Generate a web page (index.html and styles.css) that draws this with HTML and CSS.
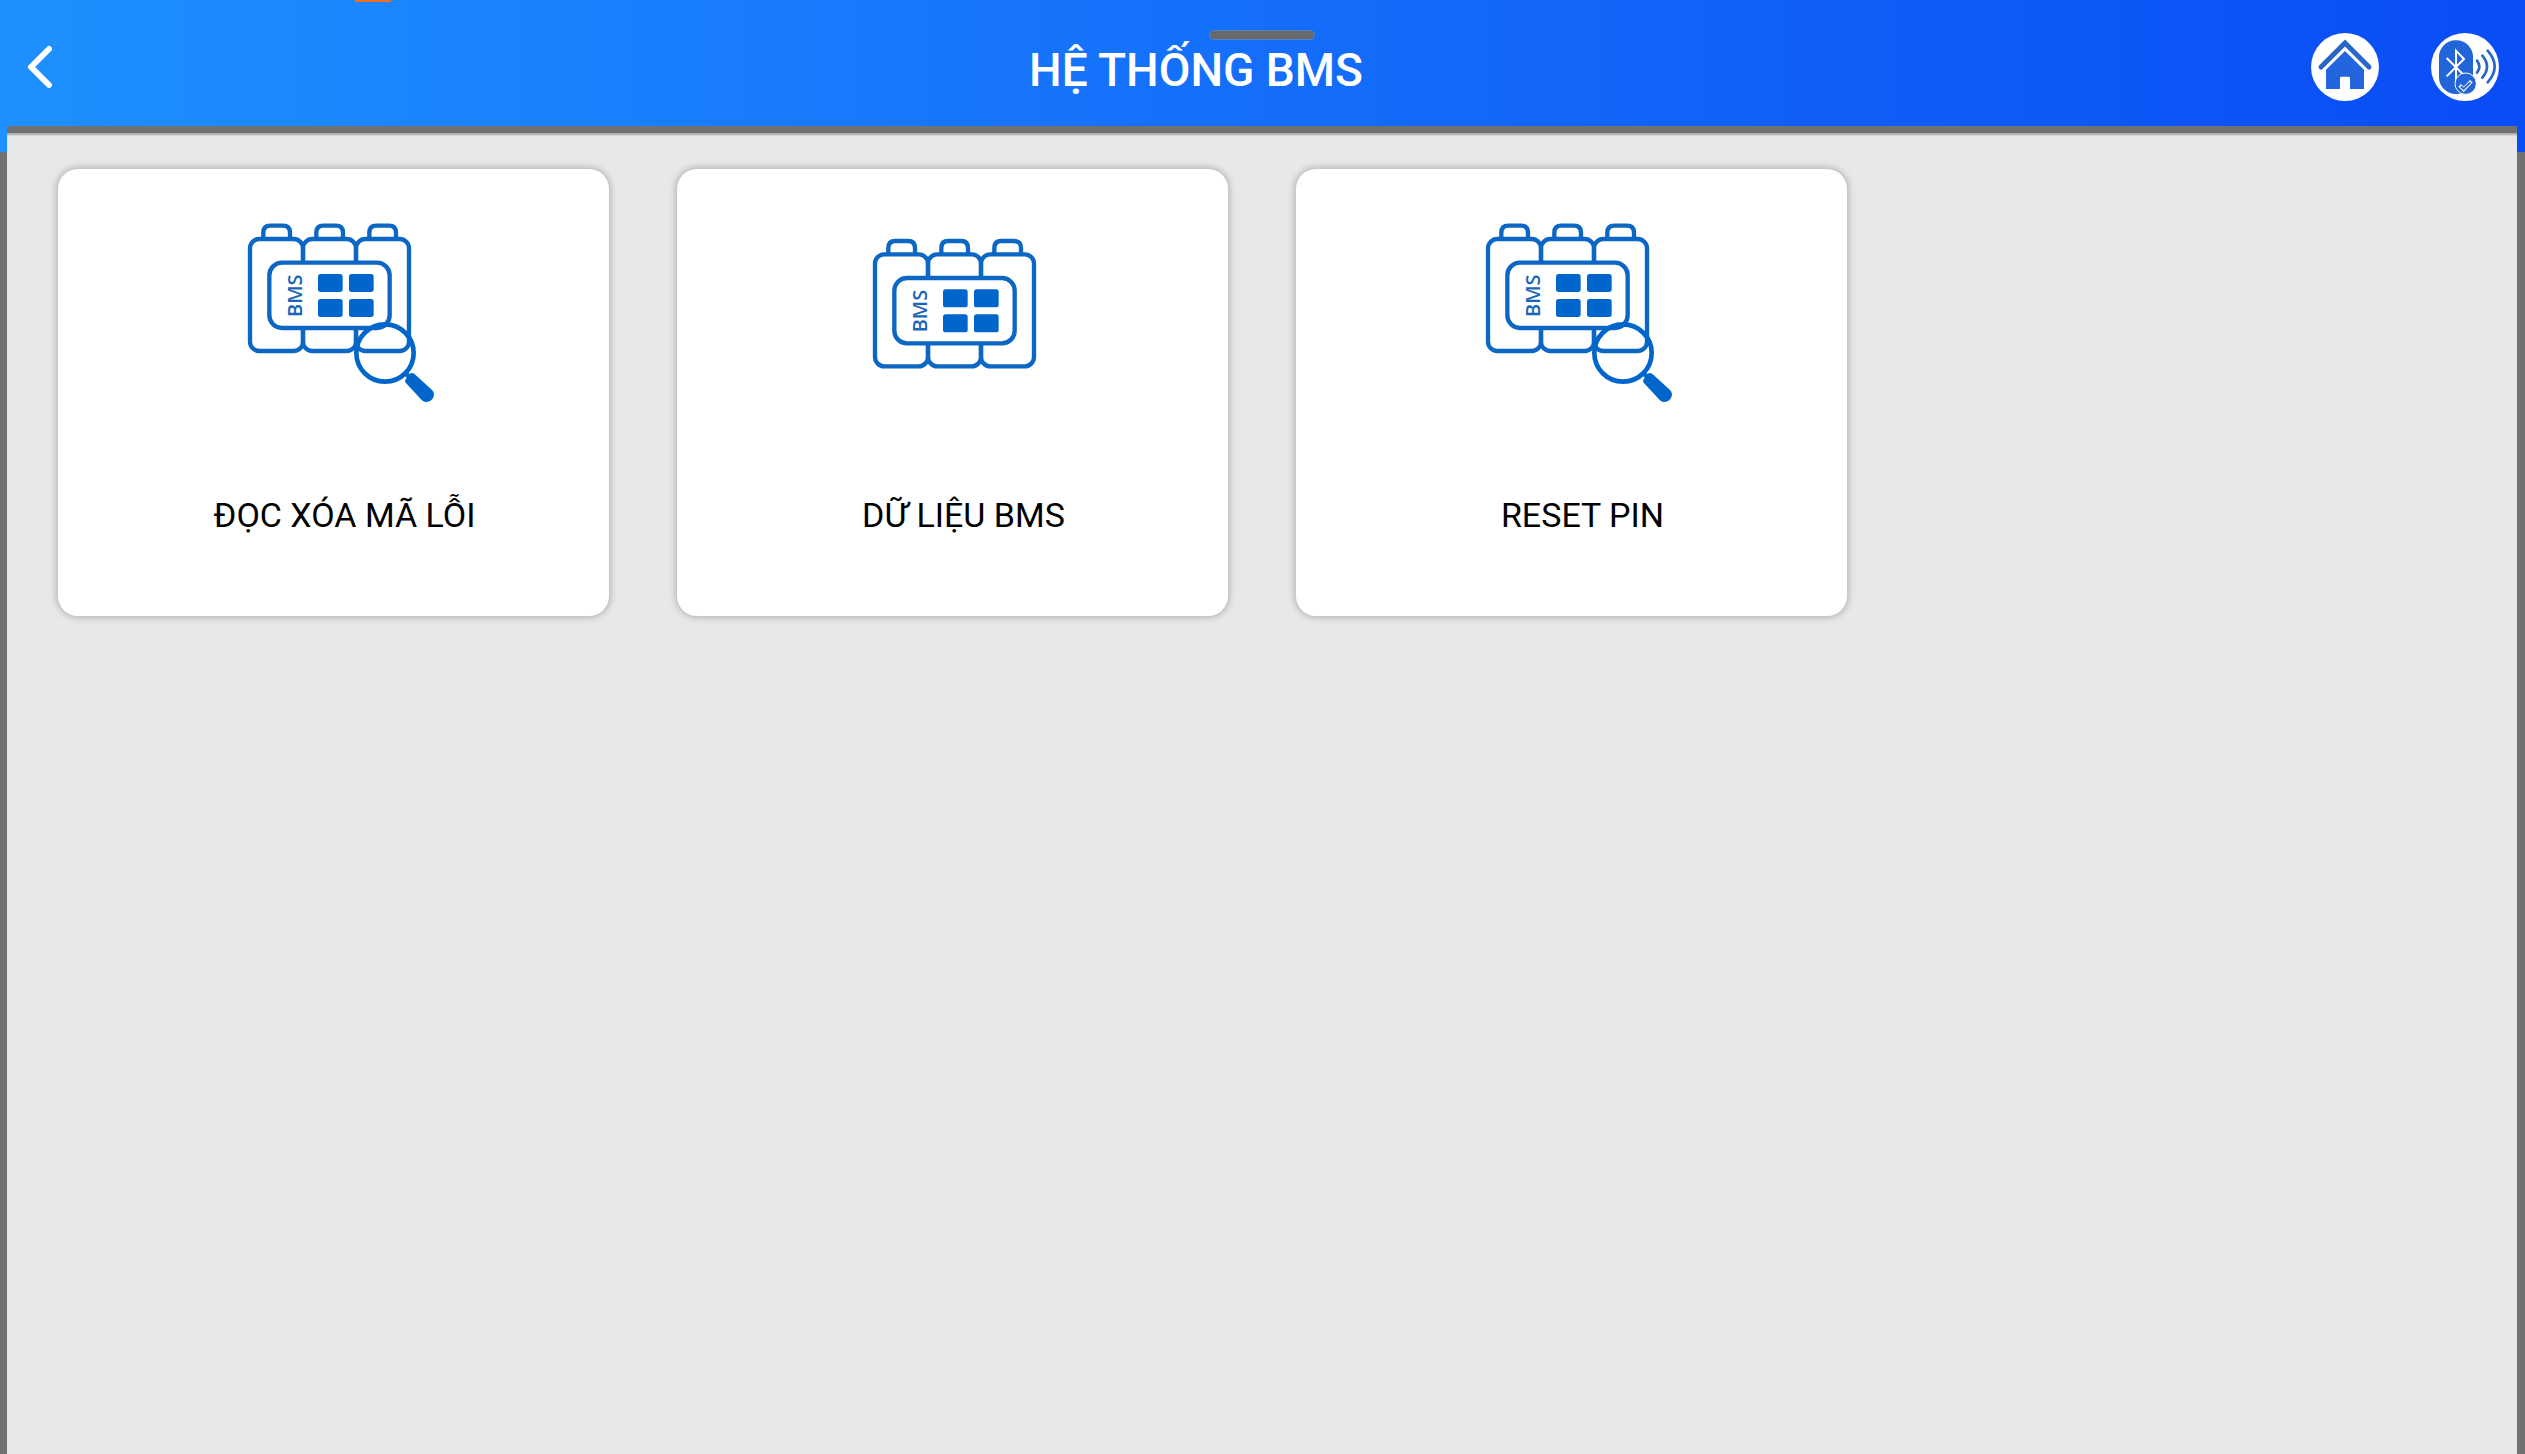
FILE: index.html
```html
<!DOCTYPE html>
<html lang="vi">
<head>
  <meta charset="UTF-8" />
  <meta name="viewport" content="width=device-width, initial-scale=1.0"/>
  <title>Hệ thống BMS</title>
  <link rel="stylesheet" href="styles.css">
</head>
<body>

<!-- Shared icon shapes -->
<svg class="sprite" aria-hidden="true">
  <symbol id="battery" viewBox="0 0 690 660">
    <g fill="none" stroke="#0b66c4" stroke-width="13">
      <path d="M100 114V98Q100 77 121 77H159Q180 77 180 98V114"/>
      <path d="M259 114V98Q259 77 280 77H318Q339 77 339 98V114"/>
      <path d="M418 114V98Q418 77 439 77H477Q498 77 498 98V114"/>
      <rect x="60" y="117" width="159" height="336" rx="28"/>
      <rect x="219" y="117" width="159" height="336" rx="28"/>
      <rect x="378" y="117" width="159" height="336" rx="28"/>
      <rect x="118" y="188" width="361" height="196" rx="38" fill="#fff"/>
    </g>
    <g fill="#0066cc">
      <rect x="264" y="222" width="74" height="54" rx="8"/>
      <rect x="357" y="222" width="74" height="54" rx="8"/>
      <rect x="264" y="297" width="74" height="54" rx="8"/>
      <rect x="357" y="297" width="74" height="54" rx="8"/>
    </g>
  </symbol>
  <symbol id="magnifier" viewBox="0 0 690 660">
    <circle cx="465" cy="459" r="86" fill="none" stroke="#0066cc" stroke-width="14"/>
    <path d="M524 517L545 538" stroke="#0066cc" stroke-width="14"/>
    <path d="M546 519Q551 519 556 524L606 570Q616 581 609 594Q602 606 588 606Q581 606 575 600L527 548Q523 542 528 536L538 523Q541 519 546 519Z" fill="#0066cc"/>
  </symbol>
</svg>

<header class="topbar">
  <button class="back" aria-label="Quay lại">
    <svg viewBox="0 0 26 44"><path d="M23 4L5 22L23 40"/></svg>
  </button>
  <h1>HỆ THỐNG BMS</h1>
  <button class="round" aria-label="Trang chủ">
    <svg viewBox="0 0 204 204">
      <circle cx="102" cy="102" r="102" fill="#fff"/>
      <path d="M30 102L102 30L174 102" fill="none" stroke="#2a66c8" stroke-width="15" stroke-linecap="round"/>
      <path d="M102 54L159 110V168H117V135Q117 131 113 131H91Q87 131 87 135V168H45V110Z" fill="#2265df"/>
    </svg>
  </button>
  <button class="round" aria-label="Bluetooth">
    <svg viewBox="0 0 204 204">
      <circle cx="102" cy="102" r="102" fill="#fff"/>
      <rect x="24" y="22" width="102" height="161" rx="50" fill="#2265d8"/>
      <path d="M47 75L98 126L75 145V53L99 78L47 130" fill="none" stroke="#fff" stroke-width="6"/>
      <circle cx="104" cy="152" r="32" fill="#2265d8" stroke="#fff" stroke-width="3"/>
      <path d="M86 157L98 169L121 145" fill="none" stroke="#fff" stroke-width="11"/>
      <path d="M89 160L98 168L118 148" fill="none" stroke="#2265d8" stroke-width="6"/>
      <g fill="none" stroke="#2a66c8" stroke-width="8" stroke-linecap="round">
        <path d="M138 83Q152 101 138 119"/>
        <path d="M154 68Q182 101 154 134"/>
        <path d="M170 53Q212 101 170 148"/>
      </g>
    </svg>
  </button>
  <span class="handle"></span>
  <span class="marker"></span>
</header>

<main class="menu">
  <button class="card">
    <svg viewBox="0 0 690 660">
      <use href="#battery"/>
      <text class="chip-text" transform="translate(215 351) rotate(-90)">BMS</text>
      <use href="#magnifier"/>
    </svg>
    <span>ĐỌC XÓA MÃ LỖI</span>
  </button>
  <button class="card">
    <svg viewBox="0 0 690 660">
      <use href="#battery" x="18" y="46" width="690" height="660"/>
      <text class="chip-text" transform="translate(233 397) rotate(-90)">BMS</text>
    </svg>
    <span>DỮ LIỆU BMS</span>
  </button>
  <button class="card">
    <svg viewBox="0 0 690 660">
      <use href="#battery"/>
      <text class="chip-text" transform="translate(215 351) rotate(-90)">BMS</text>
      <use href="#magnifier"/>
    </svg>
    <span>RESET PIN</span>
  </button>
</main>

</body>
</html>
```
FILE: styles.css
```css
* { box-sizing: border-box; }
body {
  margin: 0;
  min-height: 100vh;
  display: flex;
  flex-direction: column;
  font-family: Roboto, sans-serif;
  background: linear-gradient(to right, #1e90ff, #0a4cf5) top / 100% 152px no-repeat #717171;
}
button { border: none; padding: 0; font: inherit; cursor: pointer; }
.sprite { position: absolute; width: 0; height: 0; }
.chip-text { font: 600 60px "Open Sans", sans-serif; fill: #1a66b8; }

/* Top bar */
.topbar { position: relative; display: flex; align-items: center; height: 126px; padding: 8px 26px 0; }
.topbar h1 { flex: 1; margin: 0; padding-top: 6px; text-align: center; color: #fff; font-size: 46px; font-weight: 500; line-height: 56px; }
.back { width: 55px; height: 68px; background: none; text-align: left; }
.back svg { display: block; width: 26px; height: 44px; fill: none; stroke: #fff; stroke-width: 6; stroke-linecap: round; stroke-linejoin: round; }
.round { width: 68px; height: 68px; border-radius: 50%; background: none; }
.round svg { display: block; width: 100%; height: 100%; }
.round + .round { margin-left: 52px; }
.handle { position: absolute; top: 30px; left: 50%; width: 106px; height: 10px; margin-left: -54px; border: 1px solid #5a83bd; border-radius: 5px; background: #67696d; }
.marker { position: absolute; top: 0; left: 355px; width: 36px; height: 2px; background: #e8702a; }

/* Menu cards */
.menu {
  flex: 1;
  margin: 0 8px 0 7px;
  padding: 36px 51px;
  border-top: 7px solid #717171;
  background: #e8e8e8;
  box-shadow: inset 0 3px 2px -1px #aaa;
  display: grid;
  grid-template-columns: repeat(4, 1fr);
  gap: 68px;
  align-items: start;
}
.card {
  display: flex;
  flex-direction: column;
  align-items: center;
  padding: 31px 0 81px 22px;
  border-radius: 20px;
  background: #fff;
  color: #000;
  box-shadow: 0 0 0 1px #c8c8c8, 0 0 6px 2px #b8b8b8;
}
.card svg { width: 230px; height: 220px; }
.card span { margin-top: 75px; font-size: 34px; line-height: 40px; }

@media (max-width: 1200px) {
  .menu { grid-template-columns: repeat(auto-fill, minmax(300px, 1fr)); }
}
```
